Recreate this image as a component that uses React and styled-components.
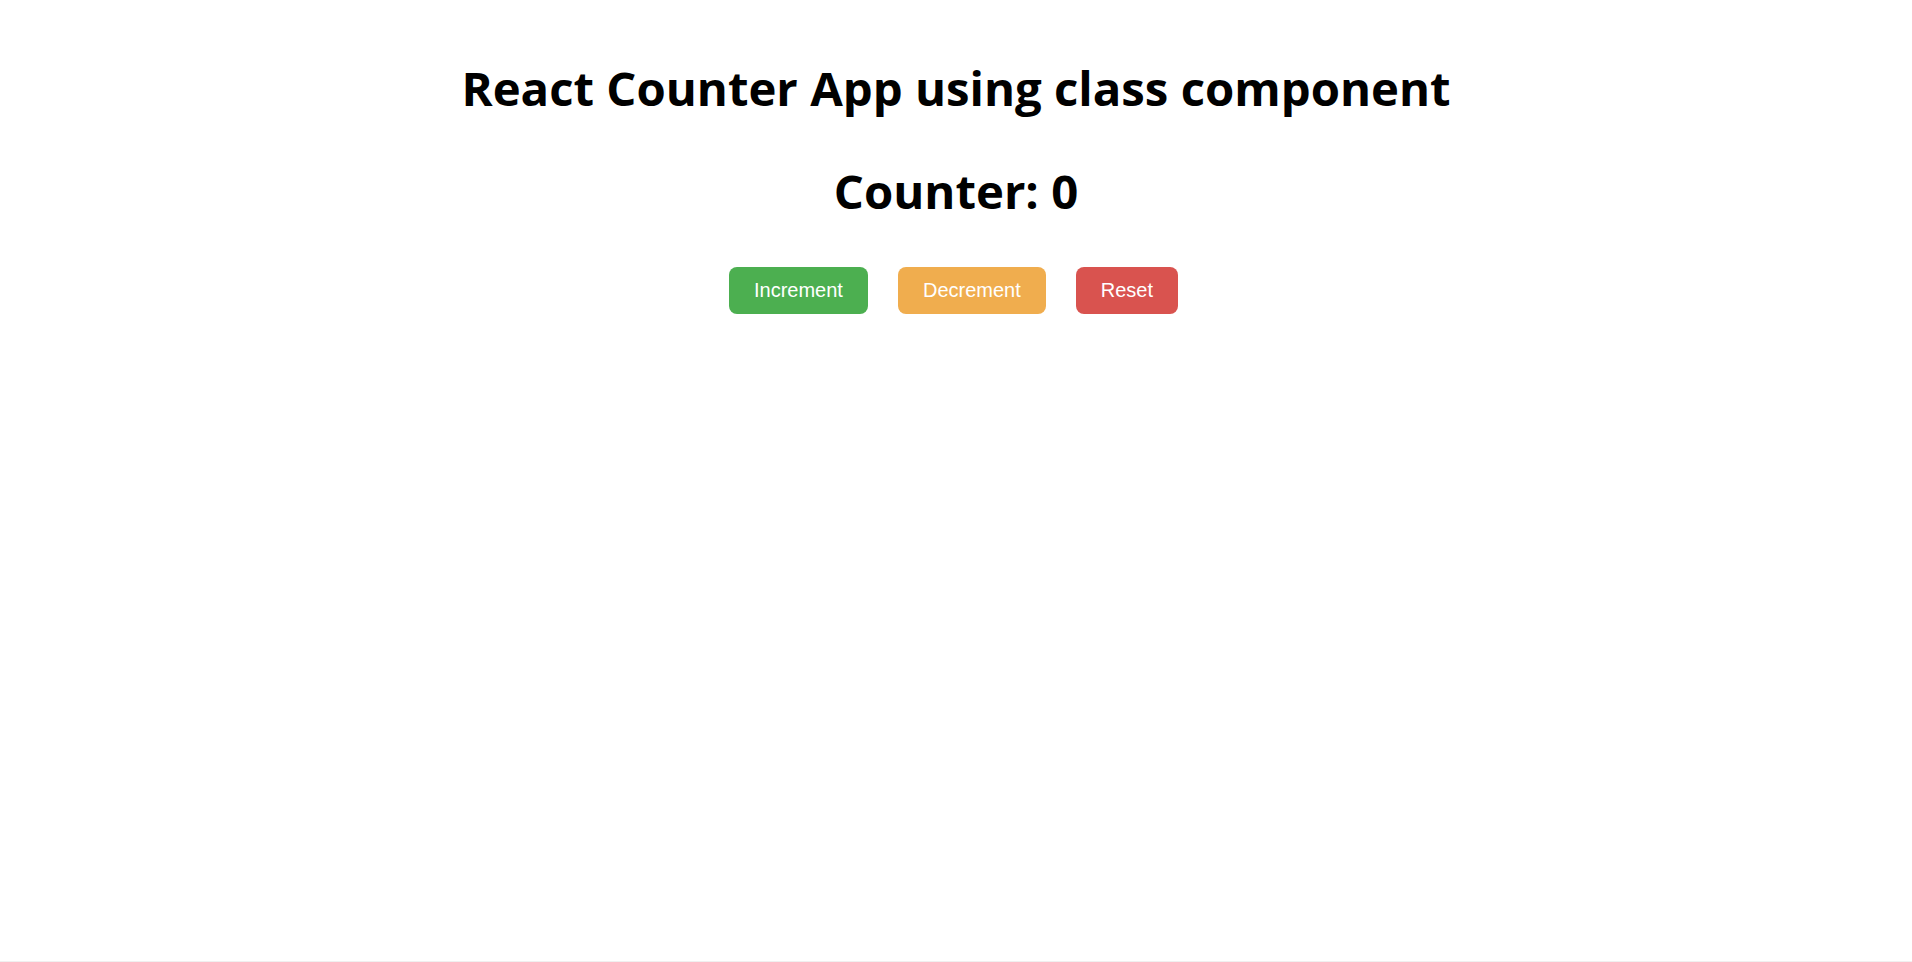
import React from 'react';
import styled, { createGlobalStyle } from 'styled-components';

const GlobalStyle = createGlobalStyle`
  * {
    box-sizing: border-box;
  }
  body {
    margin: 0;
    background: #fff;
    font-family: "Open Sans", Lato, sans-serif;
  }
`;

const Page = styled.div`
  min-height: 962px;
  display: flex;
  flex-direction: column;
  align-items: center;
  padding-top: 58px;
  border-bottom: 1px solid #f0f0f0;
`;

const Title = styled.h1`
  margin: 0;
  font-size: 47.3px;
  line-height: 60px;
  font-weight: 700;
  color: #000;
  text-align: center;
`;

const Count = styled(Title).attrs({ as: 'h2' })`
  margin-top: 43px;
`;

const Buttons = styled.div`
  display: flex;
  gap: 30px;
  margin-top: 46px;
  padding-right: 5px;
`;

const Button = styled.button`
  border: none;
  border-radius: 8px;
  padding: 12px 25px;
  font-family: "Liberation Sans", Arial, sans-serif;
  font-size: 20px;
  line-height: 23px;
  color: #fff;
  background: ${(p) => p.$color};
  cursor: pointer;
`;

export default class App extends React.Component {
  state = { count: 0 };

  render() {
    const { count } = this.state;
    return (
      <Page>
        <GlobalStyle />
        <Title>React Counter App using class component</Title>
        <Count>Counter: {count}</Count>
        <Buttons>
          <Button $color="#4caf50" onClick={() => this.setState({ count: count + 1 })}>
            Increment
          </Button>
          <Button $color="#f0ad4e" onClick={() => this.setState({ count: count - 1 })}>
            Decrement
          </Button>
          <Button $color="#d9534f" onClick={() => this.setState({ count: 0 })}>
            Reset
          </Button>
        </Buttons>
      </Page>
    );
  }
}
